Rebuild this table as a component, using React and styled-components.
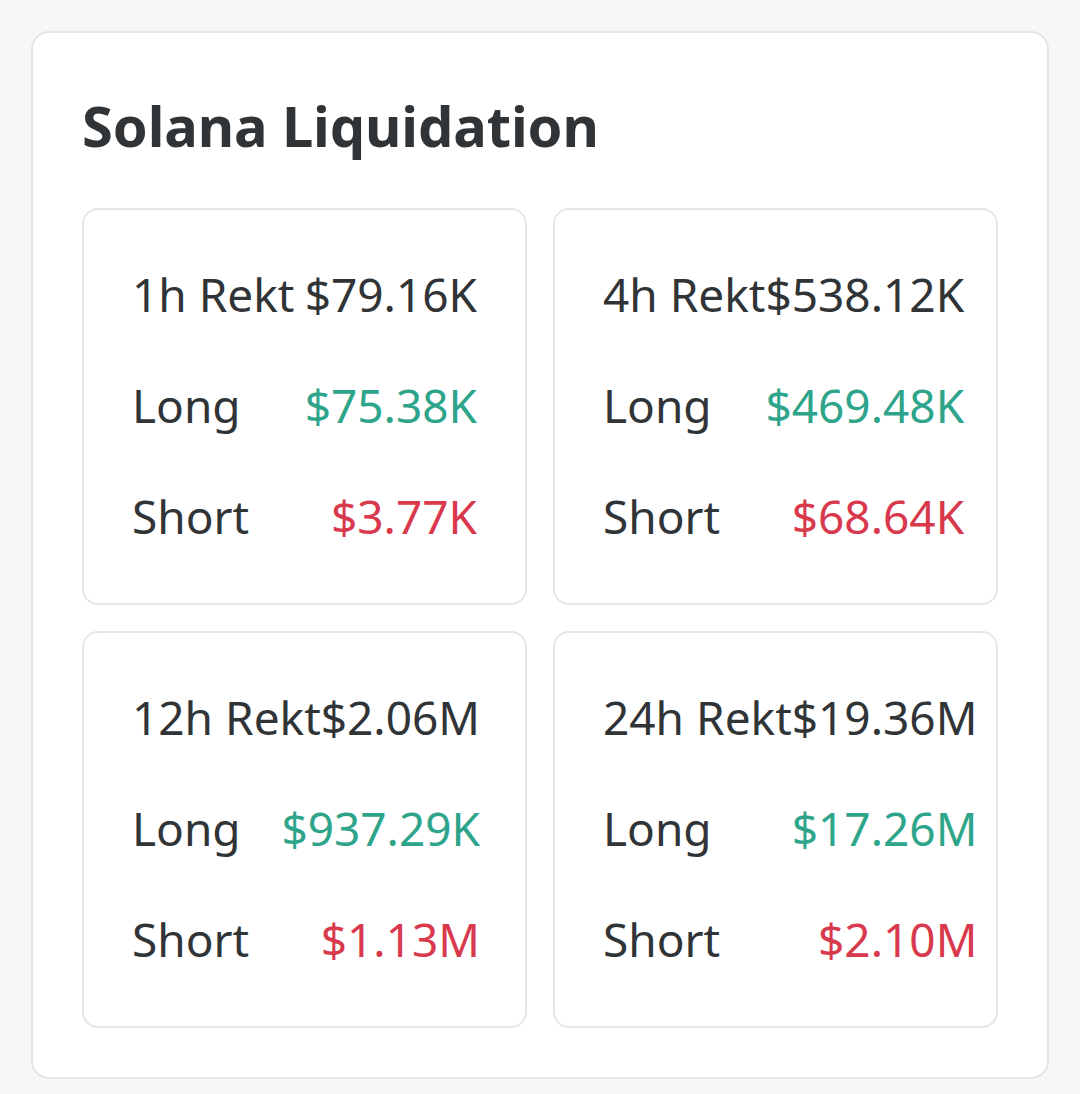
import React from "react";
import styled, { createGlobalStyle } from "styled-components";

const Global = createGlobalStyle`
  html, body { margin: 0; padding: 0; background: #f7f7f7; }
  body { font-family: "Noto Sans", "Open Sans", sans-serif; color: #303437; }
`;

const Page = styled.div`
  padding: 31px;
  width: 1080px;
  box-sizing: border-box;
`;

const Panel = styled.section`
  background: #ffffff;
  border: 2px solid #e6e6e6;
  border-radius: 18px;
  padding: 56px 49px 49px;
`;

const Title = styled.h1`
  margin: 0 0 47px;
  font-size: 56px;
  line-height: 72px;
  font-weight: 700;
  color: #303437;
  letter-spacing: -0.1px;
`;

const Grid = styled.div`
  display: grid;
  grid-template-columns: 445px 445px;
  gap: 26px;
`;

const Card = styled.div`
  box-sizing: border-box;
  height: 397px;
  border: 2px solid #e6e6e6;
  border-radius: 16px;
  padding: 29px 0 31px 48px;
  overflow: visible;
`;

const Table = styled.div`
  display: flex;
  flex-direction: column;
  width: max-content;
  min-width: 345px;
`;

const Row = styled.div`
  display: flex;
  justify-content: space-between;
  height: 111px;
  line-height: 111px;
  font-size: 46px;
  white-space: nowrap;
`;

const Label = styled.span`
  color: #303437;
`;

const Value = styled.span`
  color: ${(p) =>
    p.$tone === "up" ? "#2ea58b" : p.$tone === "down" ? "#d8394d" : "#303437"};
`;

const data = [
  { period: "1h", total: "$79.16K", long: "$75.38K", short: "$3.77K" },
  { period: "4h", total: "$538.12K", long: "$469.48K", short: "$68.64K" },
  { period: "12h", total: "$2.06M", long: "$937.29K", short: "$1.13M" },
  { period: "24h", total: "$19.36M", long: "$17.26M", short: "$2.10M" },
];

export default function App() {
  return (
    <>
      <Global />
      <Page>
        <Panel>
          <Title>Solana Liquidation</Title>
          <Grid>
            {data.map((d) => (
              <Card key={d.period}>
                <Table>
                  <Row>
                    <Label>{d.period} Rekt</Label>
                    <Value>{d.total}</Value>
                  </Row>
                  <Row>
                    <Label>Long</Label>
                    <Value $tone="up">{d.long}</Value>
                  </Row>
                  <Row>
                    <Label>Short</Label>
                    <Value $tone="down">{d.short}</Value>
                  </Row>
                </Table>
              </Card>
            ))}
          </Grid>
        </Panel>
      </Page>
    </>
  );
}
